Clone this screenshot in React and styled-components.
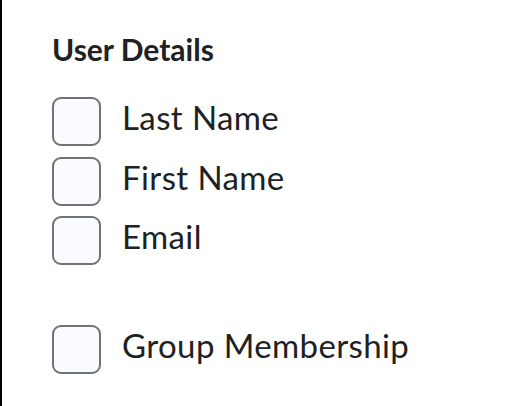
import React from "react";
import styled, { createGlobalStyle } from "styled-components";

const GlobalStyle = createGlobalStyle`
    html, body {
        margin : 0;
        padding : 0;
        background : #fff;
    }
    body {
        font-family : Lato, "Open Sans", sans-serif;
        color : #202122;
    }
`

const Panel = styled.div`
    box-sizing : border-box;
    height : 406px;
    border-left : 2px solid #000;
    padding : 31px 0 0 50px;
`

const Heading = styled.h3`
    margin : 0 0 30px;
    font-size : 30px;
    font-weight : 700;
    line-height : 36px;
`

const Group = styled.div`
    display : flex;
    flex-direction : column;
    gap : 10.5px;
    margin-bottom : ${props => props.$spaced ? "60px" : "0"};
`

const Row = styled.label`
    display : flex;
    align-items : flex-start;
    gap : 21px;
    cursor : pointer;
`

const Box = styled.input.attrs({ type : "checkbox" })`
    appearance : none;
    box-sizing : border-box;
    flex : none;
    width : 49px;
    height : 49px;
    margin : 0;
    border : 2px solid #6e7376;
    border-radius : 9px;
    background : #f9fbff;
`

const Label = styled.span`
    font-size : 33px;
    letter-spacing : 0.4px;
    line-height : 40px;
`

const details = ["Last Name", "First Name", "Email"];

export default function App() {
    return (
        <>
            <GlobalStyle />
            <Panel>
                <Heading>User Details</Heading>
                <Group $spaced>
                    {details.map(name => (
                        <Row key={name}>
                            <Box />
                            <Label>{name}</Label>
                        </Row>
                    ))}
                </Group>
                <Group>
                    <Row>
                        <Box />
                        <Label>Group Membership</Label>
                    </Row>
                </Group>
            </Panel>
        </>
    );
}
